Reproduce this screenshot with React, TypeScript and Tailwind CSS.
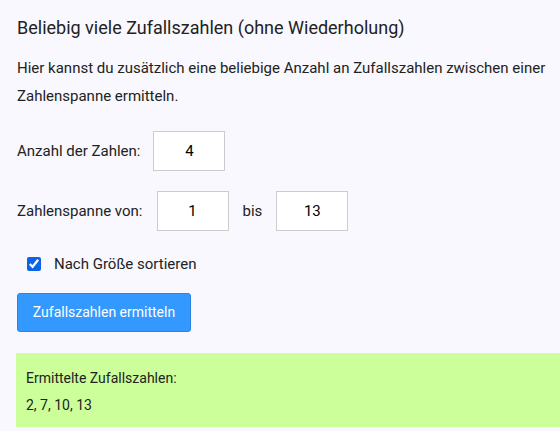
import { useState } from 'react';

export default function App() {
  const [count, setCount] = useState('4');
  const [from, setFrom] = useState('1');
  const [to, setTo] = useState('13');
  const [sorted, setSorted] = useState(true);

  return (
    <div className="min-h-[431px] bg-[#f8f8fe] pl-[17px] pt-[16px] text-[#222] font-['Roboto',sans-serif]">
      <h2 className="text-[18px] leading-[24px]">Beliebig viele Zufallszahlen (ohne Wiederholung)</h2>

      <p className="mt-[14px] text-[15px] leading-[28px] pr-2">
        Hier kannst du zusätzlich eine beliebige Anzahl an Zufallszahlen zwischen einer Zahlenspanne ermitteln.
      </p>

      <div className="mt-[21px] flex items-center gap-[13px] text-[15px]">
        <span>Anzahl der Zahlen:</span>
        <input
          value={count}
          onChange={(e) => setCount(e.target.value)}
          className="h-[40px] w-[72px] border border-[#ccc] bg-white text-center text-[15px] text-black outline-none"
        />
      </div>

      <div className="mt-[20px] flex items-center text-[15px]">
        <span className="mr-[14px]">Zahlenspanne von:</span>
        <input
          value={from}
          onChange={(e) => setFrom(e.target.value)}
          className="h-[40px] w-[72px] border border-[#ccc] bg-white text-center text-[15px] text-black outline-none"
        />
        <span className="mx-[14px]">bis</span>
        <input
          value={to}
          onChange={(e) => setTo(e.target.value)}
          className="h-[40px] w-[72px] border border-[#ccc] bg-white text-center text-[15px] text-black outline-none"
        />
      </div>

      <label className="mt-[22px] ml-[10px] flex items-center gap-[13px] text-[15px]">
        <input
          type="checkbox"
          checked={sorted}
          onChange={(e) => setSorted(e.target.checked)}
          className="h-[14px] w-[14px] accent-[#0b63e5]"
        />
        <span>Nach Größe sortieren</span>
      </label>

      <button className="mt-[17px] h-[39px] w-[174px] rounded-[3px] border border-[#2a86e0] bg-[#3399ff] text-[14px] text-white">
        Zufallszahlen ermitteln
      </button>

      <div className="mt-[21px] ml-[-1px] bg-[#ccff99] px-[10px] pt-[12px] pb-[8px] text-[14px] leading-[27px]">
        <div>Ermittelte Zufallszahlen:</div>
        <div>2, 7, 10, 13</div>
      </div>
    </div>
  );
}
